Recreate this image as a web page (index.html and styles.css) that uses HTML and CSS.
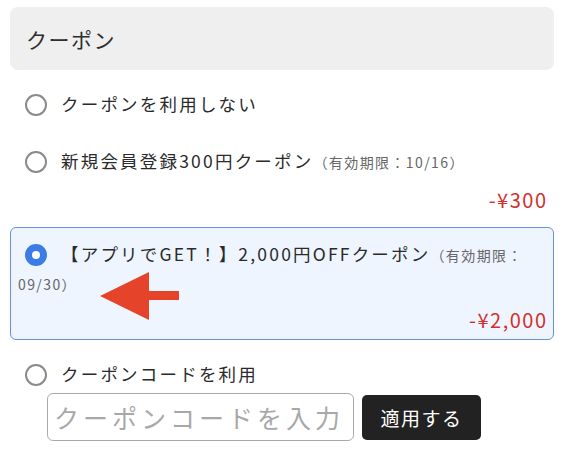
FILE: index.html
```html
<!DOCTYPE html>
<html lang="ja">
<head>
<meta charset="utf-8">
<link rel="stylesheet" href="styles.css">
</head>
<body>
<section class="coupon">
  <h2 class="coupon-head">クーポン</h2>
  <div class="option">
    <div class="line"><span class="radio"></span><span class="name">クーポンを利用しない</span></div>
  </div>
  <div class="option">
    <div class="line"><span class="radio"></span><span class="name">新規会員登録300円クーポン</span><span class="limit">（有効期限：10/16）</span></div>
    <div class="price">-¥300</div>
  </div>
  <div class="option option-selected">
    <div class="line"><span class="radio radio-on"></span><span class="name">【アプリでGET！】2,000円OFFクーポン</span><span class="limit">（有効期限：09/30）</span></div>
    <div class="price">-¥2,000</div>
    <svg class="arrow" width="90" height="50" viewBox="0 0 90 50"><polygon points="1,25 50,1 50,20 80,20 80,29 50,29 50,49" fill="#e6432b"/></svg>
  </div>
  <div class="option">
    <div class="line"><span class="radio"></span><span class="name">クーポンコードを利用</span></div>
    <div class="code-row">
      <input class="code-input" type="text" placeholder="クーポンコードを入力">
      <button class="code-btn" type="button">適用する</button>
    </div>
  </div>
</section>
</body>
</html>
```
FILE: styles.css
```css
* { box-sizing: border-box; }
body {
  margin: 0;
  background: #fff;
  font-family: "Noto Sans CJK JP", "Noto Sans", sans-serif;
  color: #333;
}
.coupon {
  width: 544px;
  margin: 7px 0 0 10px;
  display: flex;
  flex-direction: column;
  gap: 7px;
}
.coupon-head {
  margin: 0;
  height: 63px;
  background: #efefef;
  border-radius: 8px;
  padding: 0 16px;
  display: flex;
  align-items: center;
  font-size: 21px;
  font-weight: 400;
  letter-spacing: 1.5px;
  color: #2e2e2e;
}
.option {
  position: relative;
  border: 1px solid transparent;
  border-radius: 6px;
  padding: 9px 7px 5px;
  font-size: 13px;
  line-height: 26px;
}
.option-selected {
  border-color: #6593db;
  background: #eef5fe;
}
.radio {
  display: inline-block;
  width: 22px;
  height: 22px;
  border-radius: 50%;
  border: 2px solid #8a8a8a;
  background: #fff;
  vertical-align: -5px;
  margin: 0 14px 0 7px;
}
.radio-on {
  border: 7px solid #3b7ce6;
}
.name {
  font-size: 17.5px;
  line-height: 34px;
  letter-spacing: 2.2px;
  color: #2a2a2a;
}
.limit {
  font-size: 14px;
  letter-spacing: 1.4px;
  color: #666;
}
.price {
  margin: 8px -1.5px 0 0;
  font-size: 20px;
  line-height: 28px;
  letter-spacing: 1.5px;
  text-align: right;
  color: #d2302c;
}
.arrow {
  position: absolute;
  left: 88px;
  top: 43px;
}
.code-row {
  display: flex;
  align-items: center;
  gap: 8px;
  margin: 2px 0 0 29px;
}
.code-input {
  width: 307px;
  height: 48px;
  border: 1.5px solid #aaa;
  border-radius: 6px;
  padding: 0 6px;
  font-family: "Noto Sans CJK JP", sans-serif;
  font-size: 25px;
  letter-spacing: 4px;
  color: #333;
  background: #fff;
  outline: none;
}
.code-input::placeholder { color: #a8a8a8; }
.code-btn {
  width: 119px;
  height: 45px;
  border: none;
  border-radius: 5px;
  background: #222;
  color: #fff;
  font-family: "Noto Sans CJK JP", sans-serif;
  font-size: 19px;
  letter-spacing: 1.5px;
  padding: 0;
}
```
